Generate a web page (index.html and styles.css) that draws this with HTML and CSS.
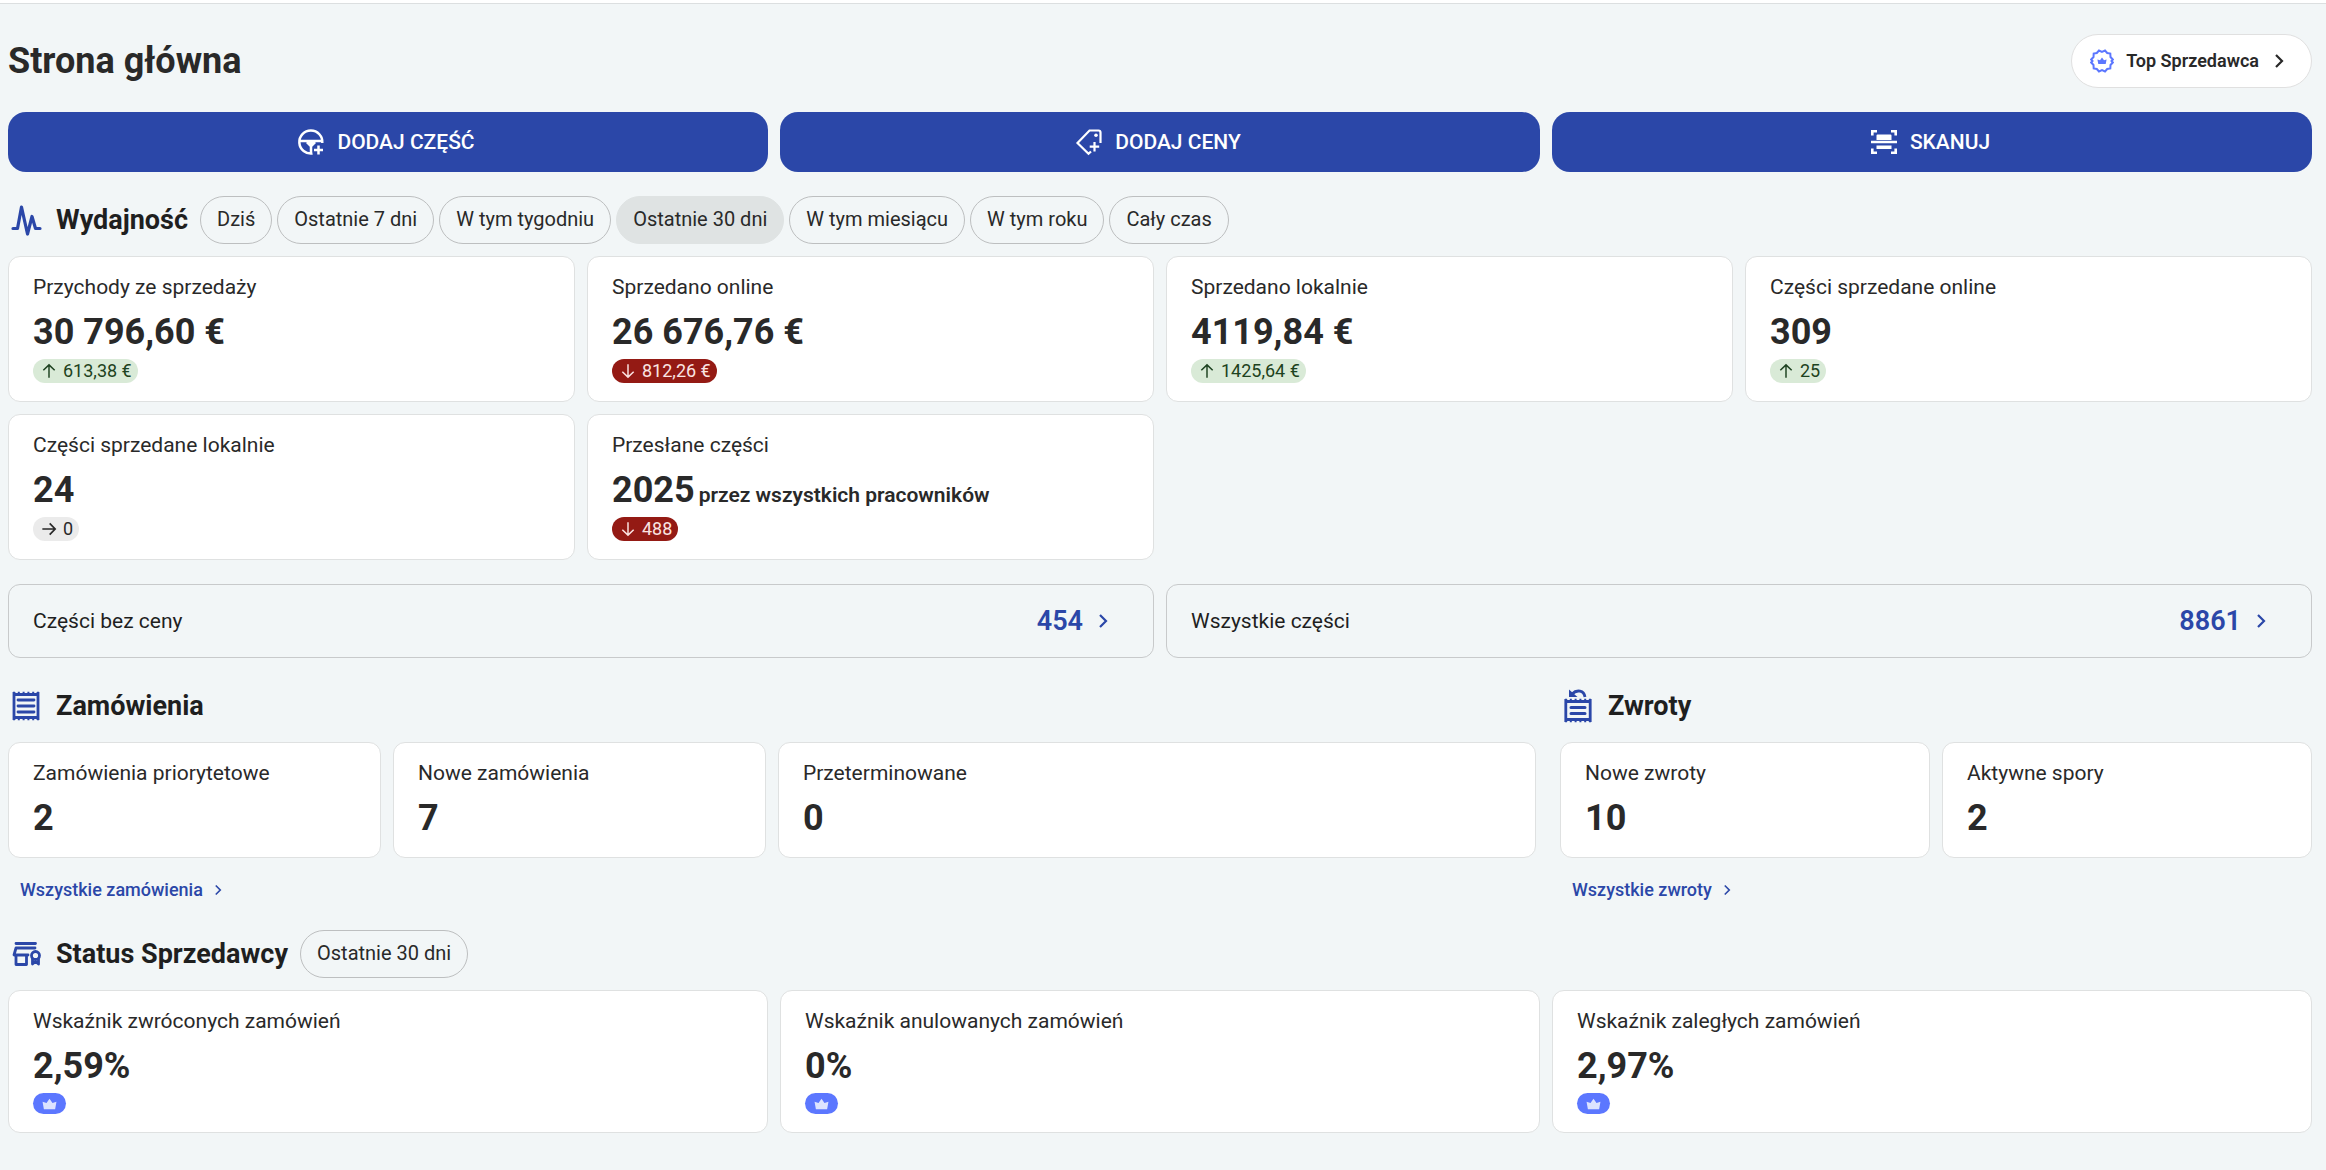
FILE: index.html
```
<!DOCTYPE html>
<html lang="pl">

<head>
    <meta charset="UTF-8">
    <title>Strona główna</title>
    <link rel="stylesheet" href="styles.css">
</head>

<body>
<!-- shared icons -->
<svg class="sprite" aria-hidden="true">
    <symbol id="chevron" viewBox="0 0 24 24"><path d="M9 6l6 6-6 6" fill="none" stroke="currentColor" stroke-width="2.2"/></symbol>
    <symbol id="arrow-up" viewBox="0 0 24 24"><path d="M12 22V3M3.500 11L12 2.800L20.500 11" fill="none" stroke="currentColor" stroke-width="2.200"/></symbol>
    <symbol id="arrow-down" viewBox="0 0 24 24"><path d="M12 2v19M3.500 13L12 21.200L20.500 13" fill="none" stroke="currentColor" stroke-width="2.200"/></symbol>
    <symbol id="arrow-right" viewBox="0 0 24 24"><path d="M2 12h19M13 3.500L21.200 12L13 20.500" fill="none" stroke="currentColor" stroke-width="2.600"/></symbol>
    <symbol id="crown" viewBox="0 0 16 12"><path d="M2 11.500L.6 3.500L4.800 5L8 .5L11.200 5L15.400 3.500L14 11.500z" fill="currentColor"/></symbol>
</svg>

<div class="topbar"></div>

<main class="page">
    <header class="page-header">
        <h1>Strona główna</h1>
        <button class="seller-button">
            <svg class="icon-24" viewBox="0 0 24 24">
                <path d="M12 2.800L15 1.500L17.200 4L20.300 4.500L20.500 8L22.800 10.500L21.500 12L22.800 13.500L20.500 16L20.300 19.500L17.200 20L15 22.500L12 21.200L9 22.500L6.800 20L3.700 19.500L3.500 16L1.200 13.500L2.500 12L1.200 10.500L3.500 8L3.700 4.500L6.800 4L9 1.500z" fill="none" stroke="currentColor" stroke-width="2"/>
                <path d="M8.300 15L7.400 10.500L10 11.300L12 8.500L14 11.300L16.600 10.500L15.700 15z" fill="currentColor"/>
            </svg>
            <span>Top Sprzedawca</span>
            <svg class="icon-24 dark" stroke-width="3"><use href="#chevron"/></svg>
        </button>
    </header>

    <div class="actions">
        <button class="action">
            <svg class="icon-28" viewBox="0 0 28 28" fill="none" stroke="currentColor" stroke-width="2.500">
                <path d="M25.300 15A11.500 11.500 0 1 0 15.500 25.400M2.500 13H25.500M14 16v9"/>
                <path d="M9.500 12H18.500V15.500L15.500 18.500H12.500L9.500 15.500z" fill="currentColor" stroke="none"/>
                <path d="M21.500 17.500v9M17 22h9"/>
            </svg>
            DODAJ CZĘŚĆ
        </button>
        <button class="action">
            <svg class="icon-28" viewBox="0 0 28 28" fill="none" stroke="currentColor" stroke-width="2.200">
                <path d="M25.500 15V4.500a2 2 0 0 0-2-2H14.500L2.500 15L13.500 25.800L16 23.500"/>
                <circle cx="21" cy="7.200" r="1.800" fill="currentColor" stroke="none"/>
                <path d="M19.500 14v9.500M14.700 18.700h9.500"/>
            </svg>
            DODAJ CENY
        </button>
        <button class="action">
            <svg class="icon-28" viewBox="0 0 28 28" fill="none" stroke="currentColor" stroke-width="2.600">
                <path d="M2.300 7.500V3.300H7M21 3.300h4.700V7.500M25.700 20.500v4.200H21M7 24.700H2.300V20.500M1 14h26"/>
                <path d="M6.500 12V7.500a1 1 0 0 1 1-1h13a1 1 0 0 1 1 1V12zM6.500 17.500h15V21h-15z" fill="currentColor" stroke="none"/>
            </svg>
            SKANUJ
        </button>
    </div>

    <section>
        <div class="section-header">
            <svg class="icon-36" viewBox="0 0 36 36" fill="none" stroke="currentColor" stroke-width="3.200" stroke-linecap="round" stroke-linejoin="round">
                <path d="M5 26.500h4.500L13.500 5L19.500 32L24 14.500L27.500 26.500H32"/>
            </svg>
            <h2>Wydajność</h2>
            <div class="chips">
                <button class="chip">Dziś</button>
                <button class="chip">Ostatnie 7 dni</button>
                <button class="chip">W tym tygodniu</button>
                <button class="chip active">Ostatnie 30 dni</button>
                <button class="chip">W tym miesiącu</button>
                <button class="chip">W tym roku</button>
                <button class="chip">Cały czas</button>
            </div>
        </div>
        <div class="cards cols-4">
            <div class="card">
                <p class="label">Przychody ze sprzedaży</p>
                <p class="value">30 796,60 €</p>
                <span class="badge up"><svg><use href="#arrow-up"/></svg>613,38 €</span>
            </div>
            <div class="card">
                <p class="label">Sprzedano online</p>
                <p class="value">26 676,76 €</p>
                <span class="badge down"><svg><use href="#arrow-down"/></svg>812,26 €</span>
            </div>
            <div class="card">
                <p class="label">Sprzedano lokalnie</p>
                <p class="value">4119,84 €</p>
                <span class="badge up"><svg><use href="#arrow-up"/></svg>1425,64 €</span>
            </div>
            <div class="card">
                <p class="label">Części sprzedane online</p>
                <p class="value">309</p>
                <span class="badge up"><svg><use href="#arrow-up"/></svg>25</span>
            </div>
            <div class="card">
                <p class="label">Części sprzedane lokalnie</p>
                <p class="value">24</p>
                <span class="badge"><svg><use href="#arrow-right"/></svg>0</span>
            </div>
            <div class="card">
                <p class="label">Przesłane części</p>
                <p class="value">2025<small>przez wszystkich pracowników</small></p>
                <span class="badge down"><svg><use href="#arrow-down"/></svg>488</span>
            </div>
        </div>
    </section>

    <div class="cards cols-2 parts">
        <a class="part-link" href="#">
            <span>Części bez ceny</span>
            <strong>454</strong>
            <svg class="icon-24"><use href="#chevron"/></svg>
        </a>
        <a class="part-link" href="#">
            <span>Wszystkie części</span>
            <strong>8861</strong>
            <svg class="icon-24"><use href="#chevron"/></svg>
        </a>
    </div>

    <div class="orders">
        <section class="orders-main">
            <div class="section-header">
                <svg class="icon-36" viewBox="0 0 36 36" fill="none" stroke="currentColor">
                    <path d="M6 4V32M30 4V32M5 6.500H31M5 29.500H31" stroke-width="2.800"/>
                    <path d="M5 4.500H31M5 31.500H31" stroke-width="1.600" stroke-dasharray="2 2.800"/>
                    <path d="M10 12H26M10 18H26M10 24H26" stroke-width="2.800" stroke-linecap="round"/>
                </svg>
                <h2>Zamówienia</h2>
            </div>
            <div class="cards cols-4">
                <div class="card">
                    <p class="label">Zamówienia priorytetowe</p>
                    <p class="value">2</p>
                </div>
                <div class="card">
                    <p class="label">Nowe zamówienia</p>
                    <p class="value">7</p>
                </div>
                <div class="card wide">
                    <p class="label">Przeterminowane</p>
                    <p class="value">0</p>
                </div>
            </div>
            <a class="more" href="#">Wszystkie zamówienia<svg><use href="#chevron"/></svg></a>
        </section>
        <section>
            <div class="section-header">
                <svg class="icon-36" viewBox="0 0 36 36" fill="none" stroke="currentColor">
                    <path d="M5.800 11V34M30.200 11V34M5 13.500H31M5 31.500H31" stroke-width="2.800"/>
                    <path d="M5 11.500H31M5 33.500H31" stroke-width="1.600" stroke-dasharray="2 2.800"/>
                    <path d="M11 19.500H25M11 25.500H25" stroke-width="3" stroke-linecap="round"/>
                    <path d="M12 6C17 1 24 2.500 25 9" stroke-width="2.800"/>
                    <path d="M9 1.500L17.500 9H9z" fill="currentColor" stroke="none"/>
                </svg>
                <h2>Zwroty</h2>
            </div>
            <div class="cards cols-2">
                <div class="card">
                    <p class="label">Nowe zwroty</p>
                    <p class="value">10</p>
                </div>
                <div class="card">
                    <p class="label">Aktywne spory</p>
                    <p class="value">2</p>
                </div>
            </div>
            <a class="more" href="#">Wszystkie zwroty<svg><use href="#chevron"/></svg></a>
        </section>
    </div>

    <section>
        <div class="section-header">
            <svg class="icon-36" viewBox="0 0 36 36" fill="none" stroke="currentColor" stroke-width="2.800" stroke-linecap="round" stroke-linejoin="round">
                <path d="M8 7.500H27.500M27 12H8L6 19H20M8 19V28.500H18.500V19"/>
                <circle cx="27.500" cy="19.500" r="4"/>
                <path d="M24.500 23V28L27.500 25.500L30.500 28V23"/>
            </svg>
            <h2>Status Sprzedawcy</h2>
            <div class="chips">
                <button class="chip">Ostatnie 30 dni</button>
            </div>
        </div>
        <div class="cards cols-3">
            <div class="card">
                <p class="label">Wskaźnik zwróconych zamówień</p>
                <p class="value">2,59%</p>
                <span class="rank"><svg><use href="#crown"/></svg></span>
            </div>
            <div class="card">
                <p class="label">Wskaźnik anulowanych zamówień</p>
                <p class="value">0%</p>
                <span class="rank"><svg><use href="#crown"/></svg></span>
            </div>
            <div class="card">
                <p class="label">Wskaźnik zaległych zamówień</p>
                <p class="value">2,97%</p>
                <span class="rank"><svg><use href="#crown"/></svg></span>
            </div>
        </div>
    </section>
</main>
</body>

</html>
```
FILE: styles.css
```
* {
    box-sizing: border-box;
}

body {
    margin: 0;
    background: #f2f6f7;
    color: #292929;
    font-family: Roboto, sans-serif;
    font-size: 21px;
    line-height: 24px;
}

h1, h2, p {
    margin: 0;
}

button {
    font: inherit;
    color: inherit;
    cursor: pointer;
}

a {
    color: #2b47a8;
    text-decoration: none;
}

svg {
    flex: none;
}

.sprite {
    display: none;
}

.topbar {
    height: 4px;
    background: #fff;
    border-bottom: 1px solid #dcdfe0;
}

.page {
    padding: 30px 14px 36px 8px;
}

.page-header {
    display: flex;
    align-items: center;
    justify-content: space-between;
}

h1 {
    font-size: 36px;
    line-height: 44px;
    font-weight: 700;
}

.seller-button {
    display: flex;
    align-items: center;
    height: 54px;
    padding: 0 20px 0 18px;
    border: 1px solid #e0e0e0;
    border-radius: 27px;
    background: #fff;
    color: #5c77ff;
    font-size: 18px;
    font-weight: 600;
}

.seller-button span {
    margin: 0 8px 0 12px;
    color: #292929;
}

.dark {
    color: #292929;
}

.icon-24 {
    width: 24px;
    height: 24px;
}

.icon-28 {
    width: 28px;
    height: 28px;
}

.icon-36 {
    width: 36px;
    height: 36px;
    color: #2b47a8;
}

/* Main action buttons */
.actions {
    display: grid;
    grid-template-columns: repeat(3, 1fr);
    gap: 12px;
    margin: 24px 0;
}

.action {
    display: flex;
    align-items: center;
    justify-content: center;
    gap: 12px;
    height: 60px;
    padding: 0 10px 0 6px;
    border: 0;
    border-radius: 18px;
    background: #2b47a8;
    color: #fff;
    font-size: 21px;
    font-weight: 500;
}

.section-header {
    display: flex;
    align-items: center;
    gap: 12px;
    height: 48px;
    margin-bottom: 12px;
}

h2 {
    color: #1f1f1f;
    font-size: 27px;
    line-height: 36px;
    font-weight: 700;
}

.chips {
    display: flex;
    gap: 5px;
}

.chip {
    height: 48px;
    padding: 0 16px 2px;
    border: 1px solid #bdbfc0;
    border-radius: 24px;
    background: none;
    font-size: 20px;
}

.chip.active {
    border-color: #dfe3e3;
    background: #dfe3e3;
}

/* Cards */
.cards {
    display: grid;
    gap: 12px;
}

.cols-2 {
    grid-template-columns: repeat(2, 1fr);
}

.cols-3 {
    grid-template-columns: repeat(3, 1fr);
}

.cols-4 {
    grid-template-columns: repeat(4, 1fr);
}

.wide {
    grid-column: span 2;
}

.card {
    padding: 18px 24px;
    border: 1px solid #dfe1e1;
    border-radius: 12px;
    background: #fff;
}

.label {
    margin-bottom: 12px;
}

.value {
    font-size: 36px;
    line-height: 42px;
    font-weight: 700;
}

.value small {
    margin-left: 4px;
    font-size: 21px;
    line-height: 24px;
    font-weight: 600;
}

.badge,
.rank {
    display: flex;
    align-items: center;
    width: fit-content;
    margin-top: 6px;
    border-radius: 12px;
}

.badge {
    gap: 6px;
    height: 24px;
    padding: 0 6px 0 8px;
    background: #ebebeb;
    font-size: 18px;
}

.badge svg {
    width: 16px;
    height: 16px;
}

.badge.up {
    background: #d9ead7;
    color: #1d4220;
}

.badge.down {
    background: #941a14;
    color: #fbe4e2;
}

.rank {
    height: 21px;
    padding: 0 9px;
    background: #5c77ff;
    color: #dde3ff;
}

.rank svg {
    width: 15px;
    height: 12px;
}

.parts {
    margin: 24px 0;
}

.part-link {
    display: flex;
    align-items: center;
    height: 74px;
    padding: 0 38px 0 24px;
    border: 1px solid #c8cacb;
    border-radius: 12px;
    color: #1f1f1f;
}

.part-link strong {
    margin: 0 8px 0 auto;
    color: #2b47a8;
    font-size: 27px;
    font-weight: 600;
}

.part-link svg {
    color: #2b47a8;
}

.orders {
    display: grid;
    grid-template-columns: repeat(3, 1fr);
    gap: 24px;
    margin-bottom: 22px;
}

.orders-main {
    grid-column: span 2;
}

.more {
    display: flex;
    align-items: center;
    gap: 6px;
    width: fit-content;
    height: 36px;
    margin: 14px 0 0 12px;
    font-size: 18px;
    font-weight: 500;
}

.more svg {
    width: 18px;
    height: 18px;
}
```
